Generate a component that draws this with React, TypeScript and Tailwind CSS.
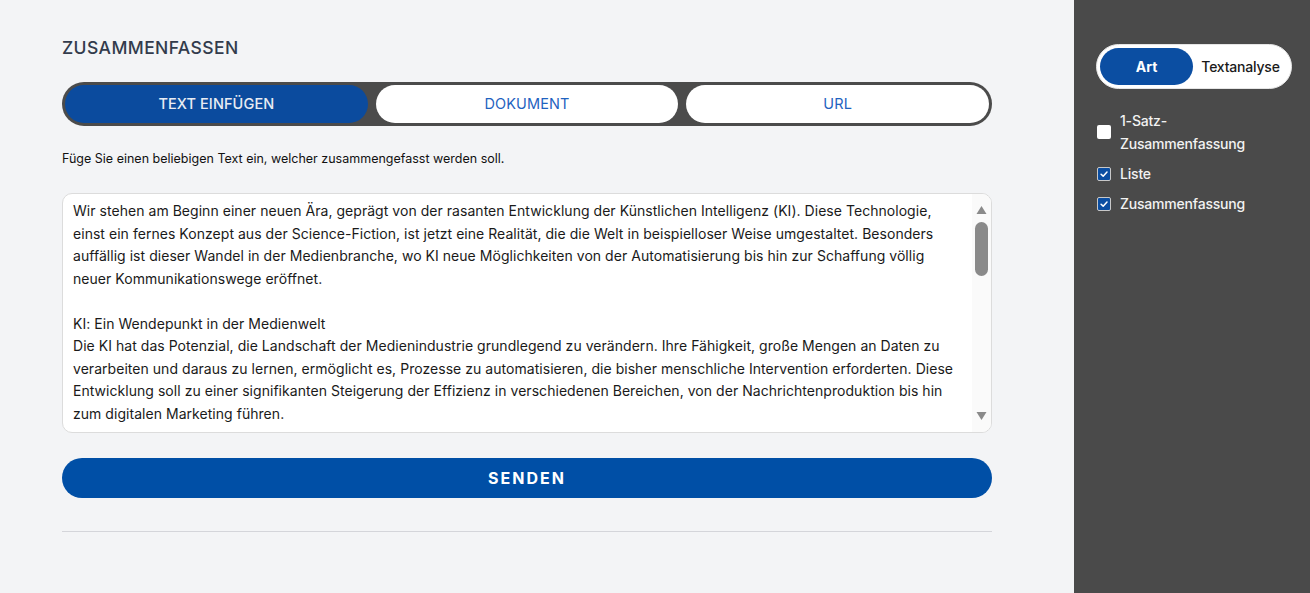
import { useState } from "react";

const tabs = ["TEXT EINFÜGEN", "DOKUMENT", "URL"];

const lines = [
  "Wir stehen am Beginn einer neuen Ära, geprägt von der rasanten Entwicklung der Künstlichen Intelligenz (KI). Diese Technologie,",
  "einst ein fernes Konzept aus der Science-Fiction, ist jetzt eine Realität, die die Welt in beispielloser Weise umgestaltet. Besonders",
  "auffällig ist dieser Wandel in der Medienbranche, wo KI neue Möglichkeiten von der Automatisierung bis hin zur Schaffung völlig",
  "neuer Kommunikationswege eröffnet.",
  "",
  "KI: Ein Wendepunkt in der Medienwelt",
  "Die KI hat das Potenzial, die Landschaft der Medienindustrie grundlegend zu verändern. Ihre Fähigkeit, große Mengen an Daten zu",
  "verarbeiten und daraus zu lernen, ermöglicht es, Prozesse zu automatisieren, die bisher menschliche Intervention erforderten. Diese",
  "Entwicklung soll zu einer signifikanten Steigerung der Effizienz in verschiedenen Bereichen, von der Nachrichtenproduktion bis hin",
  "zum digitalen Marketing führen.",
];

const options = [
  { label: "1-Satz-\nZusammenfassung", checked: false },
  { label: "Liste", checked: true },
  { label: "Zusammenfassung", checked: true },
];

const Checkbox = ({ checked }: { checked: boolean }) => (
  <span
    className={
      checked
        ? "flex h-[14px] w-[14px] shrink-0 items-center justify-center rounded-[2px] border border-[#c8c8c8] bg-[#0b4ea2]"
        : "h-[14px] w-[14px] shrink-0 rounded-[2px] bg-white"
    }
  >
    {checked && (
      <svg viewBox="0 0 12 12" className="h-[10px] w-[10px]">
        <path d="M2.5 6.3 L5 8.6 L9.6 3.6" fill="none" stroke="white" strokeWidth="1.8" strokeLinecap="round" strokeLinejoin="round" />
      </svg>
    )}
  </span>
);

const App = () => {
  const [tab, setTab] = useState(0);
  const [mode, setMode] = useState(0);

  return (
    <div className="flex h-[593px] w-full bg-[#f3f4f6] font-['Inter','Liberation_Sans',sans-serif]">
      <main className="flex-1 pl-[62px] pr-[82px] pt-[36px]">
        <h1 className="text-[17.5px] font-medium leading-6 tracking-[0.4px] text-[#323b4c]">ZUSAMMENFASSEN</h1>

        <div className="mt-[22px] flex h-[44px] gap-[8px] rounded-full bg-[#4b4b4b] p-[3px]">
          {tabs.map((t, i) => (
            <button
              key={t}
              onClick={() => setTab(i)}
              className={
                i === tab
                  ? "flex-1 rounded-full bg-[#0b4b9e] text-[14.5px] font-medium tracking-[0.1px] text-[#e8ecf3]"
                  : "flex-1 rounded-full bg-white text-[14.5px] font-normal tracking-[0.1px] text-[#1f63c0]"
              }
            >
              {t}
            </button>
          ))}
        </div>

        <p className="mt-[25px] text-[12.5px] leading-4 text-[#111]">
          Füge Sie einen beliebigen Text ein, welcher zusammengefasst werden soll.
        </p>

        <div className="mt-[26px] flex h-[240px] overflow-hidden rounded-[10px] border border-[#dcdcdc] bg-white">
          <div className="flex-1 overflow-hidden pl-[10px] pt-[6px] text-[14px] leading-[22.5px] tracking-[0.04px] text-[#1a1a1a]">
            {lines.map((l, i) => (
              <div key={i} className="h-[22.5px] whitespace-nowrap">
                {l}
              </div>
            ))}
          </div>
          <div className="flex w-[19px] flex-col items-center bg-[#fafafa] py-[12px]">
            <svg viewBox="0 0 10 8" className="h-[8px] w-[11px]">
              <path d="M5 0 L10 8 L0 8 Z" fill="#8a8a8a" />
            </svg>
            <div className="mt-[8px] h-[54px] w-[13px] rounded-full bg-[#8a8a8a]" />
            <div className="flex-1" />
            <svg viewBox="0 0 10 8" className="h-[8px] w-[11px]">
              <path d="M0 0 L10 0 L5 8 Z" fill="#8a8a8a" />
            </svg>
          </div>
        </div>

        <button className="mt-[25px] h-[40px] w-full rounded-full bg-[#004fa6] text-[16px] font-bold tracking-[2px] text-white">
          SENDEN
        </button>

        <hr className="mt-[33px] border-t border-[#d4d5da]" />
      </main>

      <aside className="w-[236px] bg-[#4a4a4a] pl-[22px] pr-[18px] pt-[44px]">
        <div className="flex h-[45px] w-[196px] items-center rounded-full border border-[#e5e5e5] bg-white p-[3px]">
          {["Art", "Textanalyse"].map((m, i) => (
            <button
              key={m}
              onClick={() => setMode(i)}
              className={
                i === mode
                  ? "h-full w-[93px] rounded-full bg-[#0b4ea2] text-[14px] font-bold text-white"
                  : "h-full flex-1 rounded-full text-[14px] font-medium tracking-[-0.2px] text-[#1a1a1a]"
              }
            >
              {m}
            </button>
          ))}
        </div>

        <ul className="mt-[20px] flex flex-col gap-[7px] pl-[1px]">
          {options.map((o) => (
            <li key={o.label} className="flex items-center gap-[9px]">
              <Checkbox checked={o.checked} />
              <span className="whitespace-pre-line text-[14px] font-medium leading-[23px] tracking-[-0.2px] text-[#f2f2f2]">{o.label}</span>
            </li>
          ))}
        </ul>
      </aside>
    </div>
  );
};

export default App;
